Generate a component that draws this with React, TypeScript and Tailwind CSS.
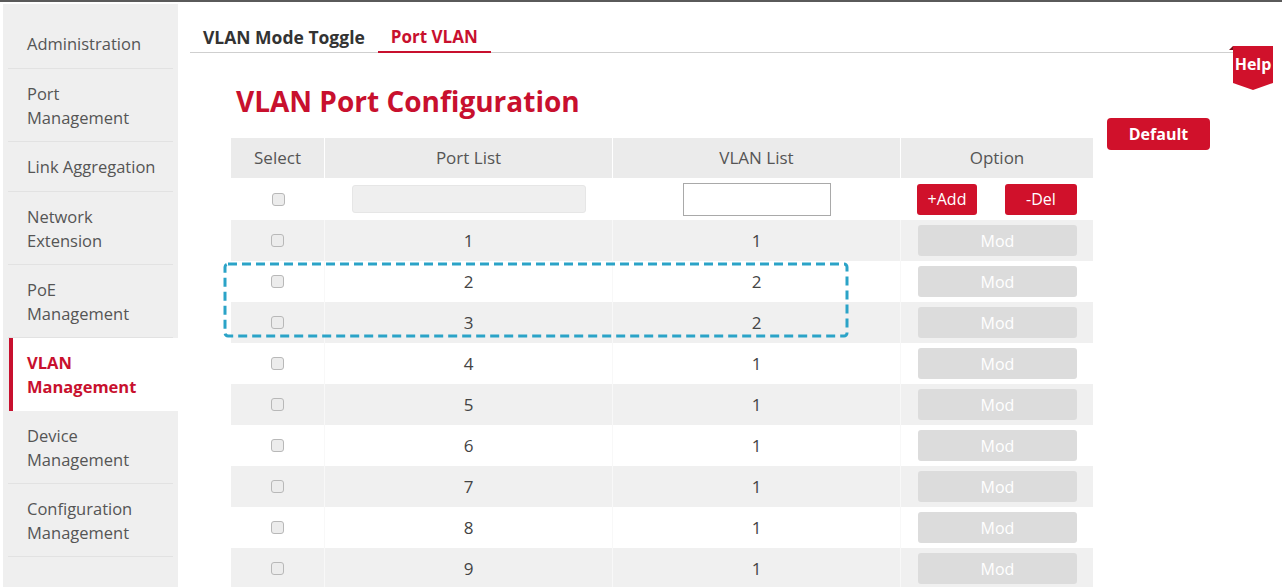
import React from 'react';

const menu = [
  { lines: ['Administration'] },
  { lines: ['Port', 'Management'] },
  { lines: ['Link Aggregation'] },
  { lines: ['Network', 'Extension'] },
  { lines: ['PoE', 'Management'] },
  { lines: ['VLAN', 'Management'], active: true },
  { lines: ['Device', 'Management'] },
  { lines: ['Configuration', 'Management'] },
];

const rows = [
  { port: '1', vlan: '1' },
  { port: '2', vlan: '2' },
  { port: '3', vlan: '2' },
  { port: '4', vlan: '1' },
  { port: '5', vlan: '1' },
  { port: '6', vlan: '1' },
  { port: '7', vlan: '1' },
  { port: '8', vlan: '1' },
  { port: '9', vlan: '1' },
];

const Checkbox = () => (
  <span className="inline-block w-[13px] h-[13px] rounded-[3px] border border-[#b8b8b8] bg-[#ececec]" />
);

const Sidebar = () => (
  <aside className="w-[175px] ml-[3px] mt-[2px] pt-[15px] bg-[#efefef] shrink-0">
    {menu.map((item, i) => (
      <div
        key={i}
        className={`relative flex flex-col justify-center ${item.lines.length > 1 ? 'h-[73px]' : 'h-[50px]'} ${
          item.active ? 'bg-white ml-[6px]' : ''
        }`}
      >
        {item.active && <span className="absolute left-0 top-0 bottom-0 w-[4px] bg-[#c8102e]" />}
        <div
          className={`leading-6 text-[16.5px] ${
            item.active ? 'pl-[18px] font-bold text-[#c8102e]' : 'pl-[24px] text-[#555]'
          }`}
        >
          {item.lines.map((l) => (
            <div key={l}>{l}</div>
          ))}
        </div>
        {!item.active && <span className="absolute left-[5px] right-[5px] bottom-0 h-px bg-[#e2e2e2]" />}
      </div>
    ))}
  </aside>
);

const HelpBadge = () => (
  <div className="absolute left-[1229px] top-[43px] w-[45px] h-[46px]">
    <svg width="45" height="46" viewBox="0 0 45 46" className="absolute inset-0">
      <polygon points="0,5 4,1 4,5" fill="#7a0d18" />
      <polygon points="4,1 44,1 44,38 24,45 4,38" fill="#d0112b" />
    </svg>
    <span className="absolute left-[3px] right-0 top-[9px] text-center text-white font-bold text-[16px] leading-5">
      Help
    </span>
  </div>
);

const DashedBox = () => (
  <svg
    width="626"
    height="76"
    viewBox="0 0 626 76"
    className="absolute left-[-8px] top-[124px] pointer-events-none"
  >
    <rect x="2" y="2" width="622" height="72" rx="3" fill="none" stroke="#2ba3c7" strokeWidth="3" strokeDasharray="9 5" />
  </svg>
);

export default function App() {
  return (
    <div
      className="relative flex w-full h-[587px] overflow-hidden bg-white border-t-2 border-[#5a5a5a]"
      style={{ fontFamily: '"Open Sans", "Liberation Sans", sans-serif' }}
    >
      <Sidebar />

      <main className="flex-1 pl-[12px] pt-[20px]">
        <div className="flex w-[1050px] h-[31px] border-b border-[#cfcfcf]">
          <div className="px-[13px] flex items-center font-bold text-[17.5px] text-[#333]">
            VLAN Mode Toggle
          </div>
          <div className="relative px-[13px] flex items-center font-bold text-[17px] text-[#c8102e]">
            Port VLAN
            <span className="absolute left-0 right-0 -bottom-[1px] h-[2px] bg-[#c8102e]" />
          </div>
        </div>

        <div className="flex items-start">
          <div className="ml-[41px]">
            <h1 className="mt-[31px] mb-[20px] ml-[5px] text-[28px] leading-[34px] font-bold text-[#c8102e]">
              VLAN Port Configuration
            </h1>

            <div className="relative w-[862px] text-[17px] text-[#444]">
              <div className="grid grid-cols-[94px_288px_288px_192px] h-[40px] bg-[#ebebeb] text-[#555]">
                <div className="flex items-center justify-center border-r border-white">Select</div>
                <div className="flex items-center justify-center border-r border-white">Port List</div>
                <div className="flex items-center justify-center border-r border-white">VLAN List</div>
                <div className="flex items-center justify-center">Option</div>
              </div>

              <div className="grid grid-cols-[94px_288px_288px_192px] h-[42px] bg-white">
                <div className="flex items-center justify-center">
                  <Checkbox />
                </div>
                <div className="flex items-center justify-center">
                  <div className="w-[234px] h-[28px] rounded-[3px] bg-[#efefef] border border-[#e6e6e6]" />
                </div>
                <div className="flex items-center justify-center">
                  <div className="w-[148px] h-[33px] bg-white border border-[#a9a9a9]" />
                </div>
                <div className="flex items-center pl-[16px] gap-[28px]">
                  <button className="w-[60px] h-[31px] rounded-[3px] bg-[#d0112b] text-white text-[16px]">
                    +Add
                  </button>
                  <button className="w-[72px] h-[31px] rounded-[3px] bg-[#d0112b] text-white text-[16px]">
                    -Del
                  </button>
                </div>
              </div>

              {rows.map((r, i) => (
                <div
                  key={r.port}
                  className={`grid grid-cols-[94px_288px_288px_192px] h-[41px] ${
                    i % 2 === 0 ? 'bg-[#f0f0f0]' : 'bg-white'
                  }`}
                >
                  <div className="flex items-center justify-center border-r border-[#f8f8f8]">
                    <Checkbox />
                  </div>
                  <div className="flex items-center justify-center border-r border-[#f8f8f8]">{r.port}</div>
                  <div className="flex items-center justify-center border-r border-[#f8f8f8]">{r.vlan}</div>
                  <div className="flex items-center pl-[17px]">
                    <button className="w-[159px] h-[31px] rounded-[3px] bg-[#dcdcdc] text-white text-[16px]">
                      Mod
                    </button>
                  </div>
                </div>
              ))}

              <DashedBox />
            </div>
          </div>

          <button className="ml-[14px] mt-[65px] w-[103px] h-[32px] rounded-[4px] bg-[#d0112b] text-white font-bold text-[16px]">
            Default
          </button>
        </div>
      </main>

      <HelpBadge />
    </div>
  );
}
